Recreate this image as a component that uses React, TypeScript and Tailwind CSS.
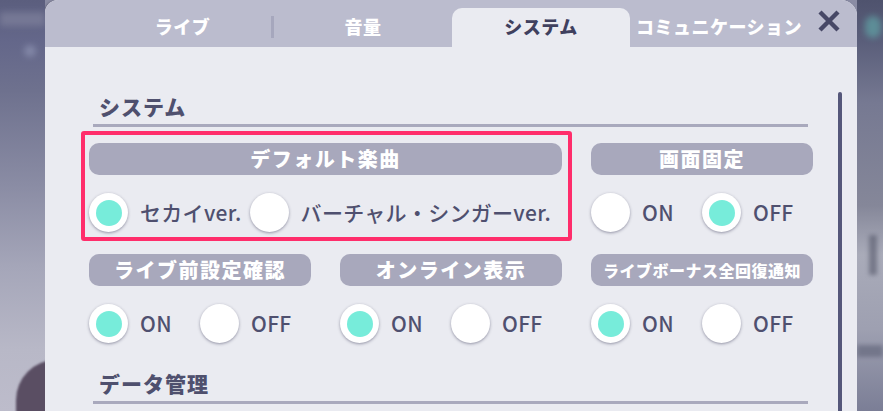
import React from 'react';

const Radio: React.FC<{ checked: boolean }> = ({ checked }) => (
  <span className="flex h-[39px] w-[39px] shrink-0 items-center justify-center rounded-full bg-white shadow-[0_1px_3px_rgba(60,60,90,0.5)]">
    {checked && <span className="h-[26px] w-[26px] rounded-full bg-[#77ecda]" />}
  </span>
);

const Option: React.FC<{ label: string; checked: boolean; fixed?: boolean }> = ({
  label,
  checked,
  fixed,
}) => (
  <div className={`flex items-center gap-3 ${fixed ? 'w-[111px]' : ''}`}>
    <Radio checked={checked} />
    <span className="text-[21px] font-medium leading-none tracking-[0.3px] text-[#4f506f]">{label}</span>
  </div>
);

const Pill: React.FC<{ label: string; small?: boolean }> = ({ label, small }) => (
  <div
    className={`flex h-8 items-center justify-center rounded-[10px] bg-[#a8a8bc] font-extrabold text-white ${
      small ? 'text-[16px] tracking-[0.5px]' : 'text-[20px] tracking-[1.5px]'
    }`}
  >
    {label}
  </div>
);

const OnOff: React.FC<{ title: string; on: boolean; small?: boolean }> = ({ title, on, small }) => (
  <div className="flex flex-col">
    <Pill label={title} small={small} />
    <div className="mt-[18px] flex items-center">
      <Option label="ON" checked={on} fixed />
      <Option label="OFF" checked={!on} />
    </div>
  </div>
);

const Heading: React.FC<{ label: string }> = ({ label }) => (
  <div className="ml-1 w-[715px] border-b-[3px] border-[#a9a9bd] pb-1 pl-[6px]">
    <span className="block text-[21px] font-extrabold leading-[28px] tracking-[1px] text-[#4f506e]">{label}</span>
  </div>
);

const tabs = ['ライブ', '音量', 'システム', 'コミュニケーション'];

export default function App() {
  return (
    <div className="flex h-[411px] w-[883px] overflow-hidden bg-[#8a8ca4] font-['Noto_Sans_CJK_JP','Noto_Sans',sans-serif]">
      {/* 左の背景 */}
      <div className="relative w-[45px] shrink-0 overflow-hidden bg-[linear-gradient(180deg,#5b5e7e_0%,#64678a_10%,#6e718e_22%,#8a8ca4_45%,#a5a6b9_65%,#b8b8c7_85%,#bdbccb_100%)]">
        <div className="absolute left-0 top-[12px] h-[14px] w-[45px] bg-[#8c8ea6] opacity-50 blur-[3px]" />
        <div className="absolute left-[24px] top-[45px] h-[12px] w-[12px] rounded-full bg-[#8f95b4] opacity-70 blur-[3px]" />
        <div className="absolute left-[16px] top-[360px] h-[80px] w-[50px] rounded-tl-[40px] bg-[#5a4e63] blur-[1px]" />
      </div>

      {/* パネル */}
      <div className="flex w-[812px] shrink-0 flex-col overflow-hidden rounded-tl-[13px] rounded-tr-[16px] bg-[#eaebf1] shadow-[-1px_0_2px_rgba(40,40,60,0.4)]">
        {/* タブ */}
        <div className="flex h-[47px] shrink-0 items-end bg-[#bbbcce] pl-[49px]">
          {tabs.map((t, i) => (
            <React.Fragment key={t}>
              <div
                className={`flex h-[39px] items-center justify-center pb-[2px] text-[18px] font-extrabold tracking-[0.5px] ${
                  i === 0 ? 'w-[177px]' : 'w-[178px]'
                } ${i === 2 ? 'rounded-t-[10px] bg-[#eaebf1] text-[#3f405e]' : 'text-white'}`}
              >
                {t}
              </div>
              {i === 0 && <div className="mb-[9px] h-[22px] w-[3px] bg-[#a6a7bd]" />}
            </React.Fragment>
          ))}
          <button className="mb-[14px] ml-[9px] flex h-[24px] w-[24px] items-center justify-center">
            <svg viewBox="0 0 24 24" className="h-[24px] w-[24px]">
              <path d="M3 3 L21 21 M21 3 L3 21" stroke="#474866" strokeWidth="4.4" strokeLinecap="butt" />
            </svg>
          </button>
        </div>

        {/* 本文 */}
        <div className="flex flex-1 pl-[44px]">
          <div className="w-[724px] pt-[45px]">
            <Heading label="システム" />

            <div className="mt-4 grid grid-cols-[222px_222px_222px] gap-x-[29px] gap-y-[22px]">
              <div className="relative col-span-2 flex flex-col">
                <div className="pointer-events-none absolute -bottom-[9px] -left-[8px] -right-[10px] -top-[12px] rounded-[3px] border-4 border-[#ff2d6b]" />
                <Pill label="デフォルト楽曲" />
                <div className="mt-[18px] flex items-center gap-[8px]">
                  <Option label="セカイver." checked />
                  <Option label="バーチャル・シンガーver." checked={false} />
                </div>
              </div>
              <OnOff title="画面固定" on={false} />
              <OnOff title="ライブ前設定確認" on />
              <OnOff title="オンライン表示" on />
              <OnOff title="ライブボーナス全回復通知" on small />
            </div>

            <div className="mt-[26px]">
              <Heading label="データ管理" />
            </div>
          </div>
          <div className="ml-[25px] mt-[45px] w-[4px] rounded-t-full bg-[#55577a]" />
        </div>
      </div>

      {/* 右の背景 */}
      <div className="relative w-[26px] shrink-0 overflow-hidden bg-[linear-gradient(180deg,#4f536e_0%,#5a5e7a_10%,#767992_25%,#858799_50%,#a9abb9_62%,#9ea0b1_80%,#7b7e96_100%)]">
        <div className="absolute left-[8px] top-[16px] h-[22px] w-[16px] rounded-full bg-[#5f9aa0] opacity-80 blur-[3px]" />
        <div className="absolute left-[12px] top-[235px] h-[40px] w-[8px] bg-[#55586a] opacity-60 blur-[2px]" />
        <div className="absolute left-0 top-[345px] h-[12px] w-[26px] bg-[#5e6176] opacity-60 blur-[2px]" />
      </div>
    </div>
  );
}
